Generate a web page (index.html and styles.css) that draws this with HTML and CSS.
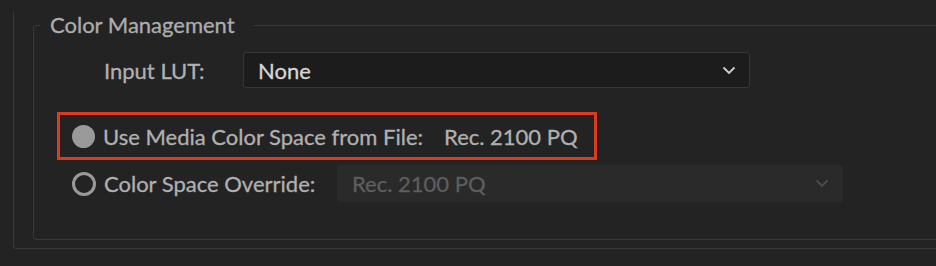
FILE: index.html
```html
<!DOCTYPE html>
<html lang="en">
<head>
  <meta charset="UTF-8">
  <title>Color Management</title>
  <link rel="stylesheet" href="styles.css">
</head>
<body>
  <div class="panel">
    <fieldset class="group">
      <legend>Color Management</legend>
      <div class="row lut-row">
        <span class="label lut-label">Input LUT:</span>
        <div class="select">
          <span>None</span>
          <svg class="chevron" width="14" height="9" viewBox="0 0 14 9"><path d="M1.5 1.5 L7 7 L12.5 1.5" fill="none" stroke="currentColor" stroke-width="1.8"/></svg>
        </div>
      </div>
      <div class="row media-row">
        <span class="radio radio-on"></span>
        <span class="label">Use Media Color Space from File:</span>
        <span class="label value">Rec. 2100 PQ</span>
      </div>
      <div class="row override-row">
        <span class="radio radio-off"></span>
        <span class="label override-label">Color Space Override:</span>
        <div class="select select-off">
          <span>Rec. 2100 PQ</span>
          <svg class="chevron" width="14" height="9" viewBox="0 0 14 9"><path d="M1.5 1.5 L7 7 L12.5 1.5" fill="none" stroke="currentColor" stroke-width="1.8"/></svg>
        </div>
      </div>
    </fieldset>
  </div>
</body>
</html>
```

FILE: styles.css
```css
body {
  margin: 0;
  background-color: #232323;
  font-family: Lato, "Open Sans", sans-serif;
  font-size: 22px;
  color: #b0b0b0;
  -webkit-text-stroke: 0.3px currentColor;
}
.panel {
  box-sizing: border-box;
  width: calc(100% - 13px);
  margin-left: 13px;
  border-left: 1px solid #383838;
  border-bottom: 1px solid #383838;
  border-bottom-left-radius: 3px;
}
.group {
  margin: 12px 0 8px 19px;
  padding: 0 0 37px 0;
  border: 1px solid #383838;
  border-right: none;
  border-radius: 4px 0 0 4px;
}
.group legend {
  margin-left: 6px;
  padding: 0 19px 0 10px;
  line-height: 26px;
  color: #adadad;
}
.row {
  display: flex;
  align-items: center;
}
.lut-row {
  margin-top: 14px;
  padding-left: 70px;
}
.lut-label {
  width: 139px;
}
.select {
  display: flex;
  align-items: center;
  justify-content: space-between;
  box-sizing: border-box;
  width: 507px;
  height: 36px;
  padding: 0 13px 0 14px;
  background-color: #1c1c1c;
  border: 1px solid #363636;
  border-radius: 3px;
  color: #d6d6d6;
}
.chevron {
  color: #cfcfcf;
  -webkit-text-stroke: 0;
}
.media-row {
  box-sizing: border-box;
  width: 540px;
  height: 48px;
  margin: 24px 0 0 23px;
  padding: 0 0 0 12px;
  border: 3px solid #de3a1f;
}
.radio {
  box-sizing: border-box;
  width: 23px;
  height: 23px;
  margin-right: 8px;
  border-radius: 50%;
}
.radio-on {
  background-color: #9a9a9a;
}
.radio-off {
  width: 24px;
  height: 24px;
  border: 3px solid #9a9a9a;
}
.value {
  margin-left: 21px;
}
.override-row {
  margin-top: 5px;
  padding-left: 38px;
}
.override-label {
  width: 233px;
}
.select-off {
  width: 506px;
  height: 37px;
  background-color: #2a2a2a;
  border-color: #2a2a2a;
  color: #5e5e5e;
}
.select-off .chevron {
  color: #4c4c4c;
}
```
